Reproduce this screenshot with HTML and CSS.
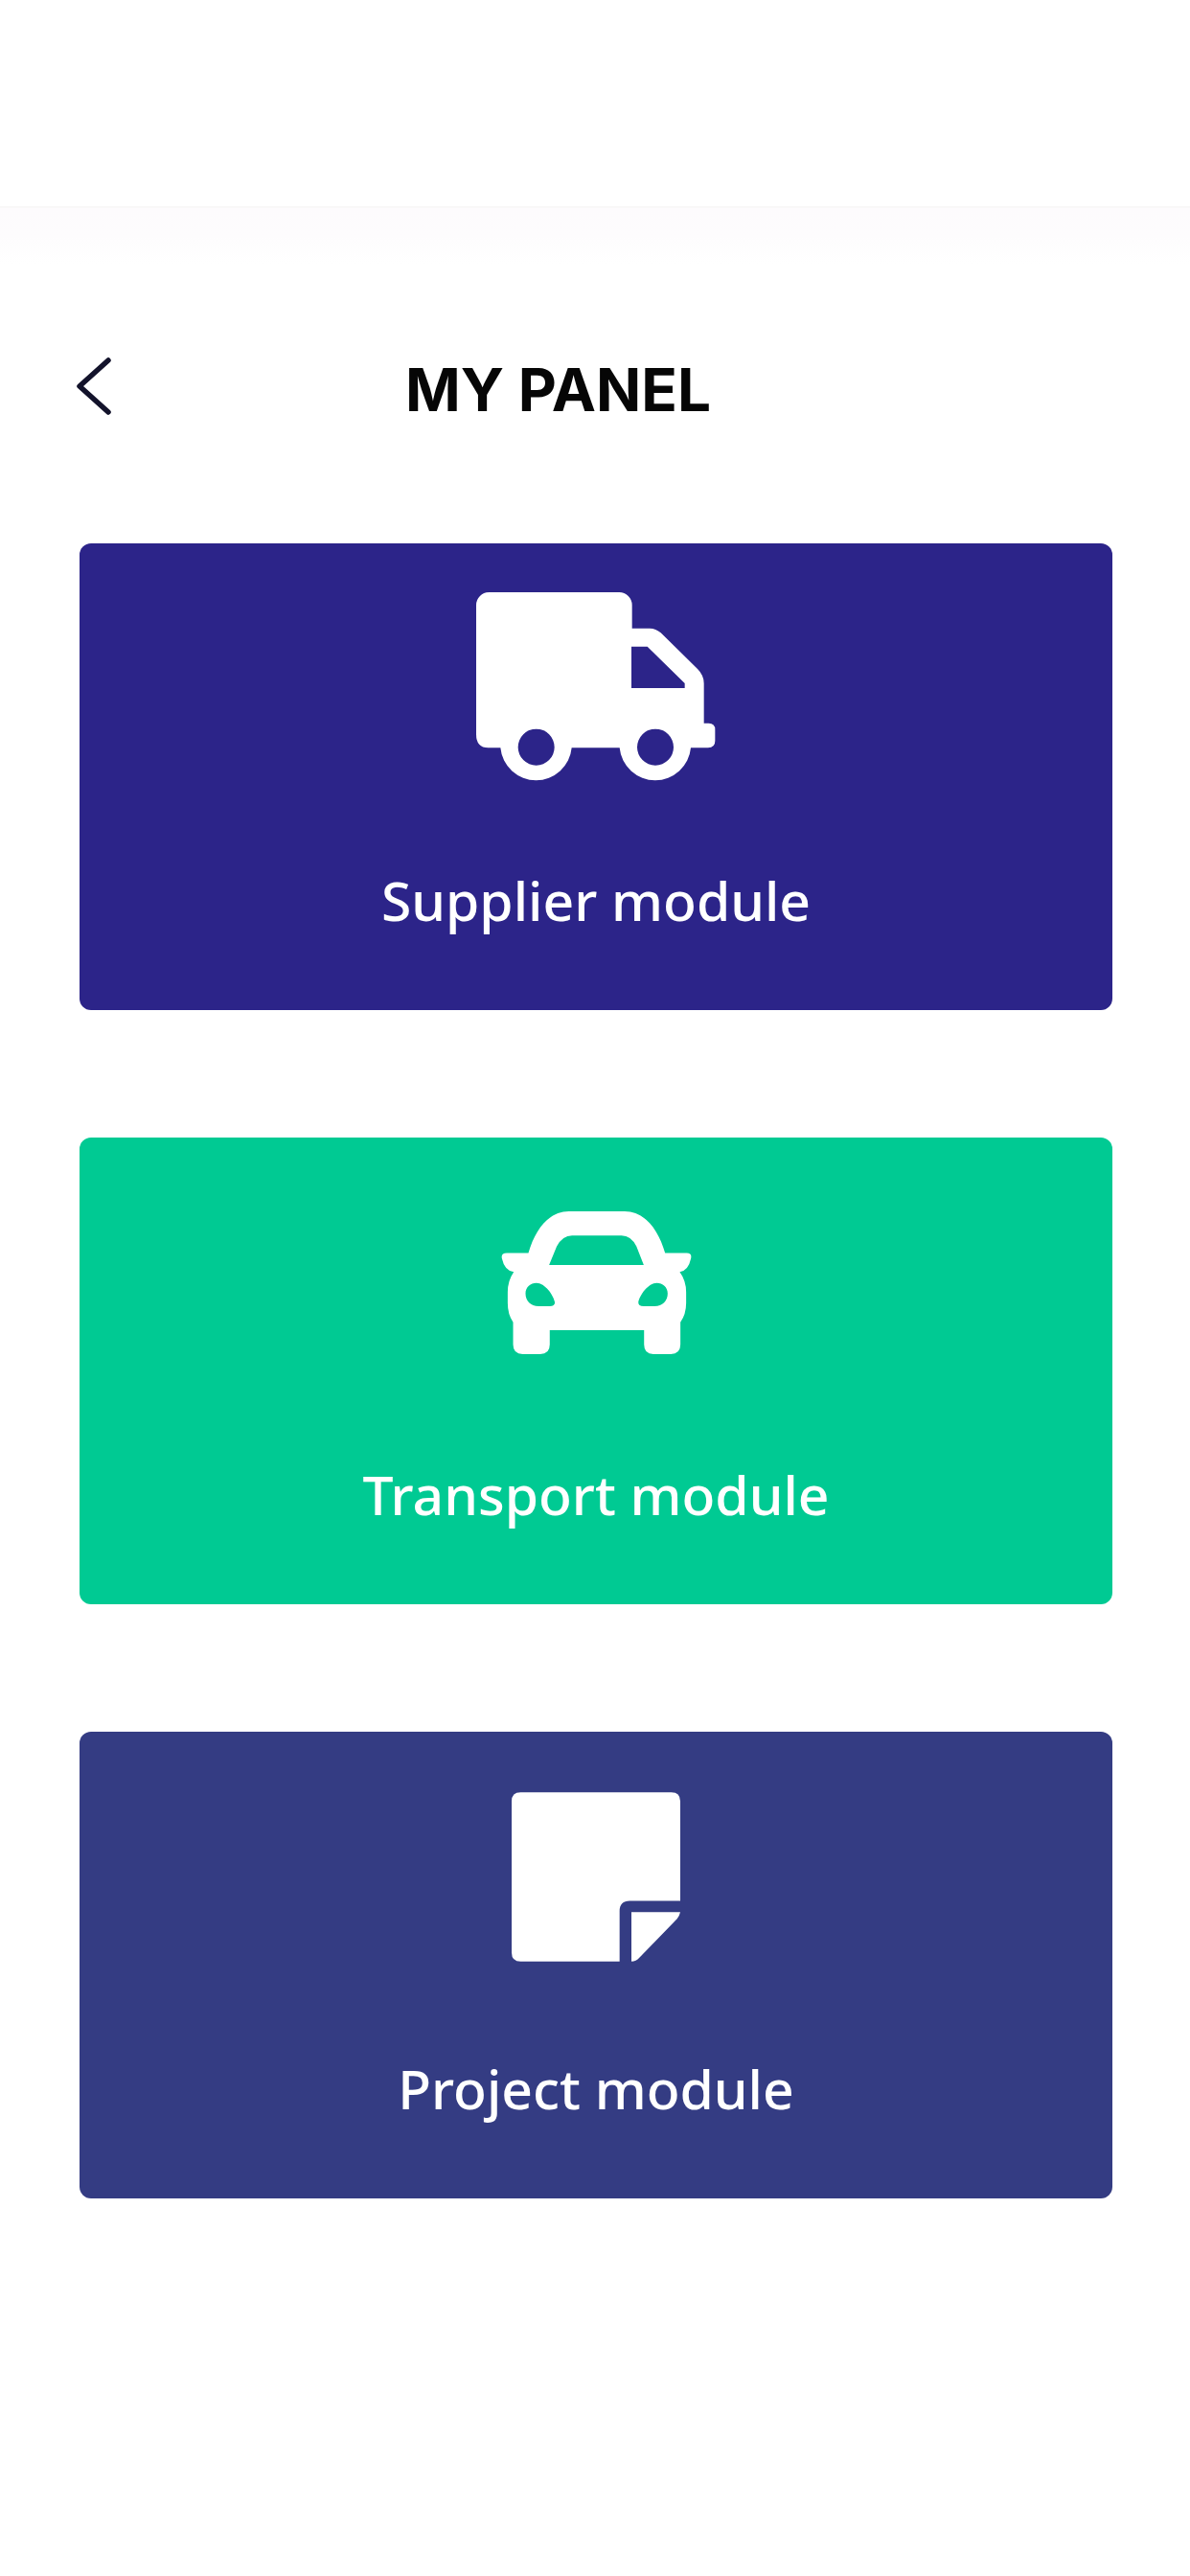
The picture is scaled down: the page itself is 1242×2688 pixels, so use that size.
FILE: index.html
```html
<!DOCTYPE html>
<html lang="en">
<head>
<meta charset="utf-8">
<title>My Panel</title>
<link rel="stylesheet" href="styles.css">
</head>
<body>
<div class="status-space"></div>
<div class="tint-band"></div>
<header class="header">
  <svg class="back" viewBox="0 0 36 68" aria-hidden="true"><polyline points="33,6 3,33 33,60" /></svg>
  <h1 class="title">MY PANEL</h1>
</header>
<main class="cards">
  <a class="card card-supplier">
    <div class="icon-area">
      <svg class="icon-truck" viewBox="82 85 750 600" aria-hidden="true"><path fill-rule="evenodd" d="M82 125a40 40 0 0 1 40-40H530a40 40 0 0 1 40 40V198H625Q645 198 660 212L775 325Q795 345 795 370V495H810Q830 495 830 515V550Q830 572 808 572H754A112 112 0 0 1 531 572H381A112 112 0 0 1 158 572H120Q82 572 82 530ZM568 255V385H735V370L618 255ZM213 570a57 57 0 1 0 114 0a57 57 0 1 0-114 0ZM586 570a57 57 0 1 0 114 0a57 57 0 1 0-114 0Z"/></svg>
    </div>
    <span class="label">Supplier module</span>
  </a>
  <a class="card card-transport">
    <div class="icon-area">
      <svg class="icon-car" viewBox="98 72 597 448" aria-hidden="true"><path fill-rule="evenodd" d="M183 203C205 125 250 72 310 72H485C545 72 590 125 612 203H680Q697 203 693 220Q685 258 658 262Q678 290 678 325V360Q678 395 660 420V490Q660 520 630 520H575Q546 520 546 490V445H250V490Q250 520 220 520H165Q135 520 135 490V420Q118 395 118 360V325Q118 290 137 262Q108 258 100 220Q96 203 115 203ZM248 240H545L522 182Q505 148 475 148H320Q290 148 272 182ZM174 330C174 310 190 297 208 297C235 297 262 335 266 358Q266 370 250 370H215C190 370 174 352 174 330ZM620 330C620 310 604 297 586 297C559 297 532 335 528 358Q528 370 544 370H579C604 370 620 352 620 330Z"/></svg>
    </div>
    <span class="label">Transport module</span>
  </a>
  <a class="card card-project">
    <div class="icon-area">
      <svg class="icon-note" viewBox="100 62 528 530" aria-hidden="true"><path d="M128 62H600Q628 62 628 90V402H470Q438 402 438 434V592H128Q100 592 100 564V90Q100 62 128 62Z"/><path d="M475 437H628Q625 450 618 458L500 580Q490 592 475 592Z"/></svg>
    </div>
    <span class="label">Project module</span>
  </a>
</main>
</body>
</html>
```
FILE: styles.css
```css
* { box-sizing: border-box; }
html, body { margin: 0; padding: 0; }
body {
  width: 1242px;
  height: 2688px;
  background: #ffffff;
  overflow: hidden;
  font-family: "Noto Sans", "Liberation Sans", sans-serif;
}
.status-space { height: 215px; background: #ffffff; }
.tint-band {
  height: 60px;
  border-top: 2px solid #f9f8f8;
  background: linear-gradient(#fdfbfd, #fdfcfd 50%, #ffffff);
}
.header {
  display: flex;
  align-items: center;
  height: 68px;
  margin-top: 95px;
  padding-left: 80px;
}
.back { width: 36px; height: 68px; flex: none; }
.back polyline {
  fill: none;
  stroke: #13132b;
  stroke-width: 5.5;
  stroke-linecap: round;
  stroke-linejoin: round;
}
.title {
  margin: 5px 0 0 307px;
  color: #060606;
  font-family: Inter, "Noto Sans", sans-serif;
  font-size: 62px;
  font-weight: 700;
  line-height: 68px;
  white-space: nowrap;
}
.cards {
  display: flex;
  flex-direction: column;
  gap: 133px;
  margin-top: 129px;
  padding: 0 81px 0 83px;
}
.card {
  display: flex;
  flex-direction: column;
  align-items: center;
  height: 487px;
  border-radius: 12px;
  color: #ffffff;
}
.card-supplier { background: #2c2489; }
.card-transport { background: #00ca93; }
.card-project { background: #343c83; }
.icon-area {
  display: flex;
  align-items: center;
  justify-content: center;
  width: 100%;
  height: 302px;
}
.icon-area svg { display: block; fill: #ffffff; }
.icon-truck { width: 250px; height: 200px; }
.icon-car { width: 199px; height: 149px; }
.icon-note { width: 176px; height: 177px; }
.label {
  margin-top: 30px;
  font-size: 57px;
  font-weight: 500;
  line-height: 80px;
  white-space: nowrap;
}
```
